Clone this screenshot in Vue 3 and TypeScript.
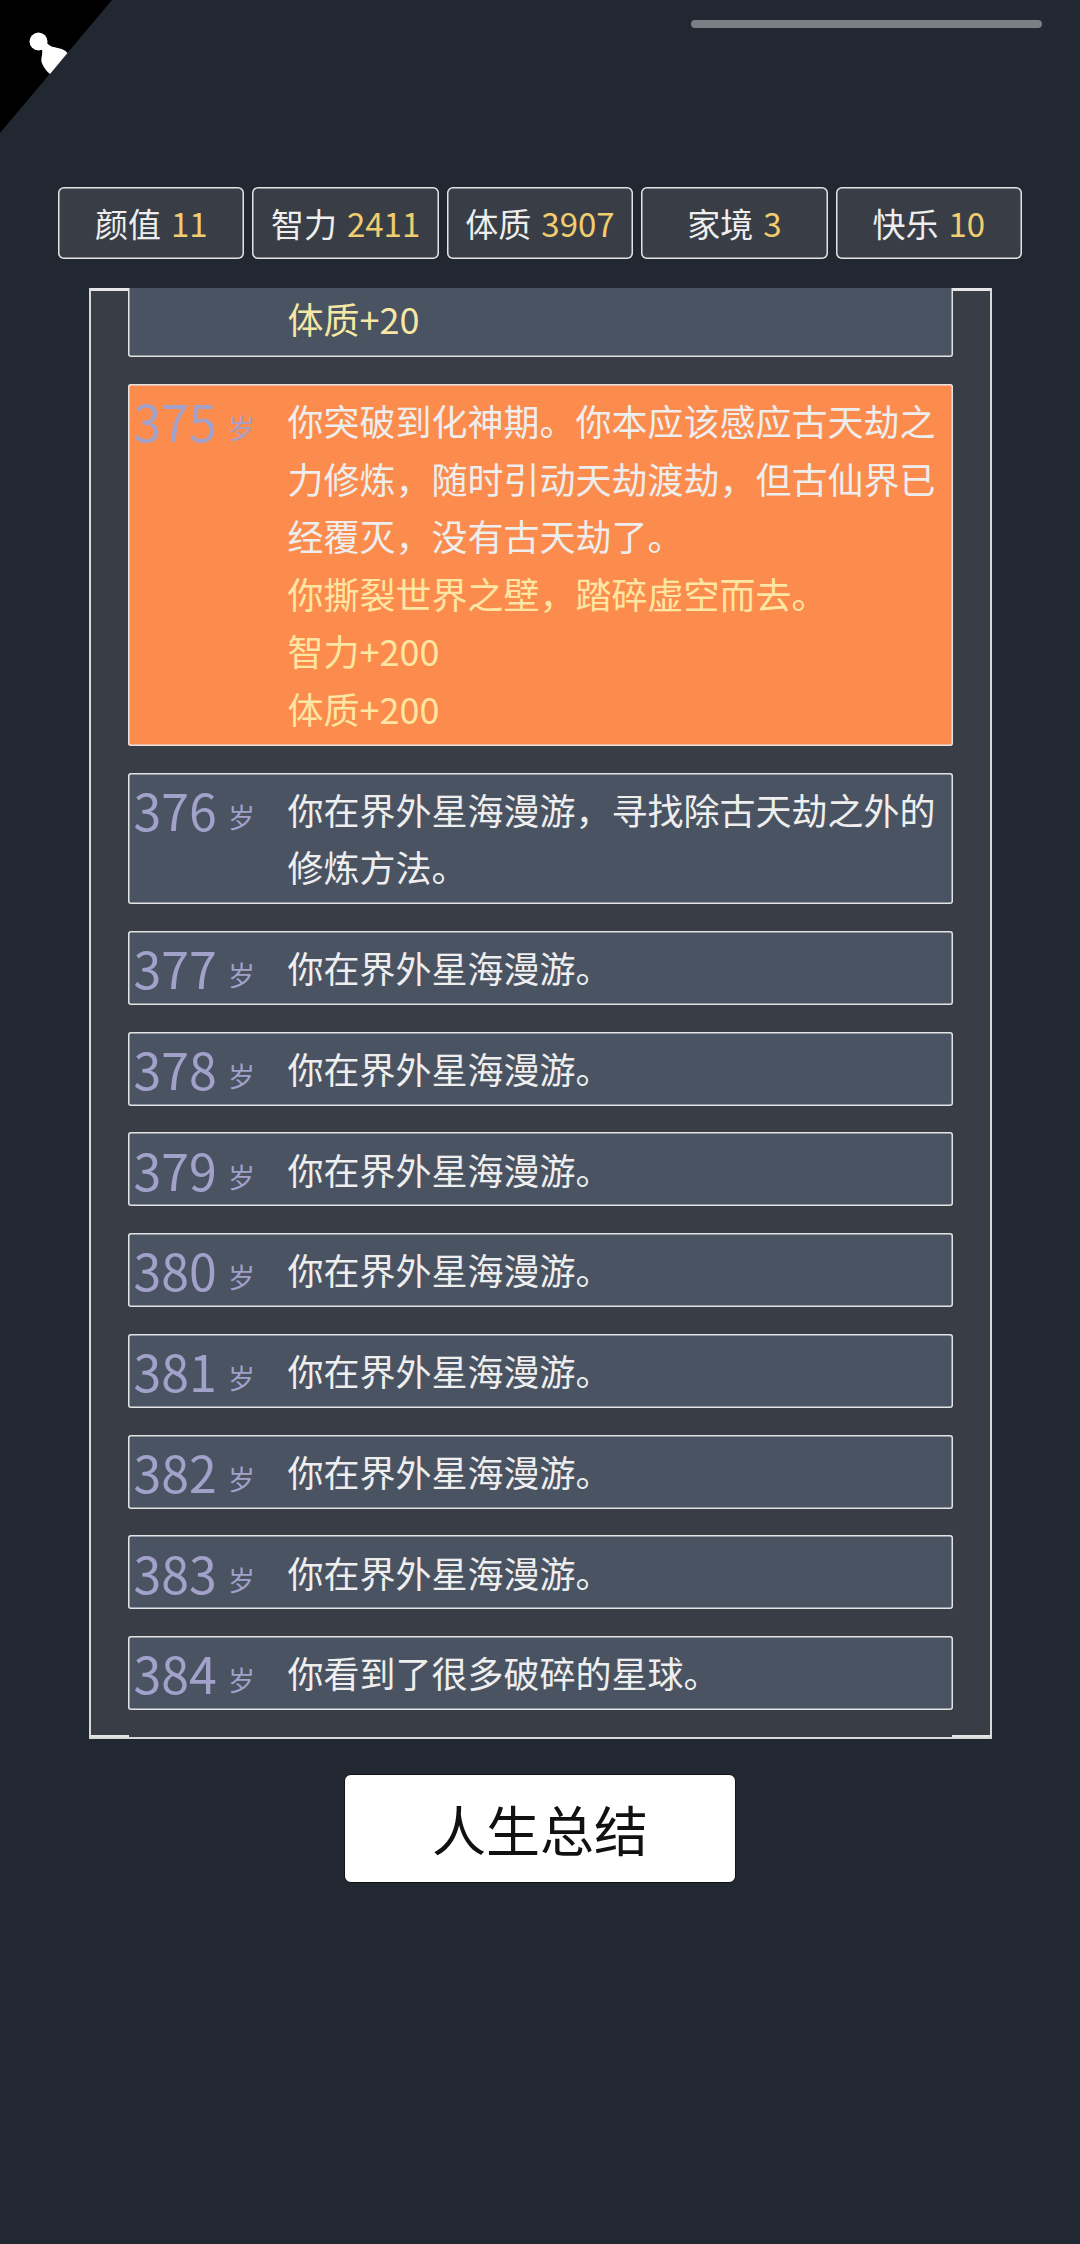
<script setup lang="ts">
type Stat = { label: string; value: number }
type LifeRow = { age: number; lines: { text: string; gold?: boolean }[]; hot?: boolean }

const stats: Stat[] = [
  { label: '颜值', value: 11 },
  { label: '智力', value: 2411 },
  { label: '体质', value: 3907 },
  { label: '家境', value: 3 },
  { label: '快乐', value: 10 },
]

const roam = '你在界外星海漫游。'

const rows: LifeRow[] = [
  {
    age: 375,
    hot: true,
    lines: [
      { text: '你突破到化神期。你本应该感应古天劫之力修炼，随时引动天劫渡劫，但古仙界已经覆灭，没有古天劫了。' },
      { text: '你撕裂世界之壁，踏碎虚空而去。', gold: true },
      { text: '智力+200', gold: true },
      { text: '体质+200', gold: true },
    ],
  },
  { age: 376, lines: [{ text: '你在界外星海漫游，寻找除古天劫之外的修炼方法。' }] },
  { age: 377, lines: [{ text: roam }] },
  { age: 378, lines: [{ text: roam }] },
  { age: 379, lines: [{ text: roam }] },
  { age: 380, lines: [{ text: roam }] },
  { age: 381, lines: [{ text: roam }] },
  { age: 382, lines: [{ text: roam }] },
  { age: 383, lines: [{ text: roam }] },
  { age: 384, lines: [{ text: '你看到了很多破碎的星球。' }] },
]
</script>

<template>
  <div class="page">
    <svg class="corner" width="112" height="133" viewBox="0 0 112 133">
      <path d="M0 0H112L0 133Z" fill="#000" />
      <circle cx="38.500" cy="41.500" r="9" fill="#fff" />
      <path
        d="M40 48L47 43C50 47 54 47 58 48C62 49 65 50 67.500 53L50 74C46 71 43 66 41.500 62C41 57 43 53 42 50Z"
        fill="#fff"
      />
    </svg>

    <div class="top-bar"><div class="progress"></div></div>

    <div class="stats">
      <div v-for="stat in stats" :key="stat.label" class="stat">
        {{ stat.label }} <span class="stat-value">{{ stat.value }}</span>
      </div>
    </div>

    <div class="panel">
      <i class="tick top-left"></i>
      <i class="tick top-right"></i>
      <i class="tick bottom-left"></i>
      <i class="tick bottom-right"></i>
      <div class="list">
        <div class="row row-cut">
          <div class="age"></div>
          <div class="body"><p class="gold">体质+20</p></div>
        </div>
        <div v-for="row in rows" :key="row.age" class="row" :class="{ hot: row.hot }">
          <div class="age">{{ row.age }} <small>岁</small></div>
          <div class="body">
            <p v-for="line in row.lines" :key="line.text" :class="{ gold: line.gold }">{{ line.text }}</p>
          </div>
        </div>
      </div>
    </div>

    <button class="summary">人生总结</button>
  </div>
</template>

<style scoped>
.page {
  position: relative;
  display: flex;
  flex-direction: column;
  align-items: center;
  height: 2244px;
  overflow: hidden;
  background: #222831;
  font-family: "Noto Sans CJK SC", "Noto Sans", sans-serif;
  color: #eeeeee;
}

.corner {
  position: absolute;
  top: 0;
  left: 0;
}

.top-bar {
  align-self: stretch;
  display: flex;
  justify-content: flex-end;
  padding: 20px 38px 0 0;
}

.progress {
  width: 351px;
  height: 8px;
  border-radius: 4px;
  background: #7b7f86;
}

.stats {
  display: flex;
  gap: 8px;
  margin-top: 159px;
}

.stat {
  display: flex;
  align-items: center;
  justify-content: center;
  gap: 10px;
  box-sizing: border-box;
  width: 186.400px;
  height: 72px;
  border-radius: 6px;
  background: #393e46;
  box-shadow: inset 0 0 0 1.500px #e4e4e4;
  font-size: 33px;
}

.stat-value {
  color: #f0cd6e;
}

.panel {
  position: relative;
  box-sizing: border-box;
  width: 903px;
  height: 1451px;
  margin-top: 29px;
  padding: 0 37px;
  overflow: hidden;
  border: 2px solid #d8d8d8;
  border-top: 0;
  background: #393e46;
}

.tick {
  position: absolute;
  width: 38px;
  height: 2.500px;
  background: #e6e6e6;
}

.top-left {
  top: 0;
  left: 0;
}

.top-right {
  top: 0;
  right: 0;
}

.bottom-left {
  bottom: 0;
  left: 0;
}

.bottom-right {
  bottom: 0;
  right: 0;
}

.list {
  display: flex;
  flex-direction: column;
  gap: 26.800px;
}

.row {
  display: flex;
  box-sizing: border-box;
  padding: 8.200px 0 8.200px 6px;
  border-radius: 3px;
  background: #4a5362;
  box-shadow: inset 0 0 0 1.500px #e4e4e4;
}

/* top of this row is scrolled out of the panel */
.row-cut {
  height: 73px;
  margin-top: -4px;
  padding-top: 6px;
}

.hot {
  background: #fc8c4d;
}

.age {
  flex: none;
  width: 154px;
  height: 57.600px;
  font-size: 50px;
  line-height: 57.600px;
  white-space: nowrap;
  color: #a2a1c9;
}

.age small {
  position: relative;
  top: -3px;
  font-size: 27px;
}

.body {
  width: 650px;
  font-size: 36px;
  line-height: 57.600px;
}

.body p {
  margin: 0;
}

.gold {
  color: #f6e7a4;
}

.hot .gold {
  color: #fde6a4;
}

.summary {
  box-sizing: border-box;
  width: 392px;
  height: 109px;
  margin-top: 35px;
  padding: 0;
  border: 1.500px solid #111111;
  border-radius: 7px;
  background: #ffffff;
  font-family: inherit;
  font-size: 54px;
  color: #111111;
}
</style>

<style>
html,
body {
  margin: 0;
  background: #222831;
}
</style>
